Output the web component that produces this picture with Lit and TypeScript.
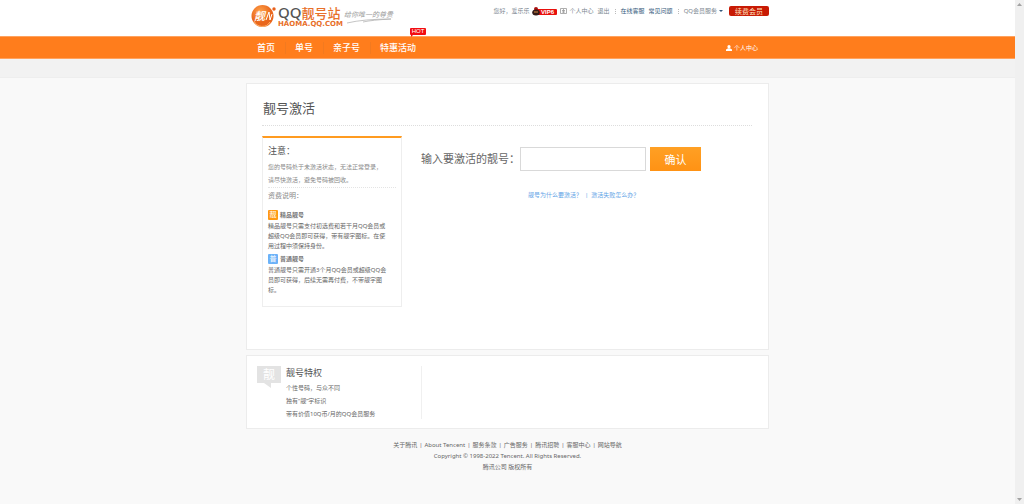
import { LitElement, html, css } from "lit";
import { customElement } from "lit/decorators.js";

const NAV = ["首页", "单号", "亲子号", "特惠活动"];
const FOOT = ["关于腾讯", "About Tencent", "服务条款", "广告服务", "腾讯招聘", "客服中心", "网站导航"];

@customElement("app-root")
export class AppRoot extends LitElement {
  static styles = css`
    :host {
      display: flex;
      min-height: 100vh;
      background: #f9f9f9;
      color: #666;
      font: 6px/10px "Noto Sans", "Noto Sans CJK SC", sans-serif;
    }
    * { box-sizing: border-box; }
    a { color: inherit; text-decoration: none; }
    h1, h2, h3, p, ul { margin: 0; padding: 0; font-weight: 400; list-style: none; }
    .page { flex: 1; min-width: 0; }
    .track {
      width: 9px;
      background: #f0f0f0;
      display: flex;
      flex-direction: column;
      justify-content: space-between;
      align-items: center;
      padding: 3px 0;
    }
    .track svg { width: 5px; height: 3px; fill: #a3a3a3; }
    .wrap { max-width: 523px; margin: 0 auto; }
    .top { background: #fff; }
    .top .wrap { display: flex; justify-content: space-between; height: 36px; }
    .brand { display: flex; align-items: flex-start; padding: 4px 0 0 5px; }
    .mark { width: 26px; height: 24px; }
    .names { width: 64px; padding: 1px 0 0 1px; white-space: nowrap; }
    .name { display: flex; font-size: 13px; line-height: 16px; font-weight: 500; color: #e8702a; }
    .name b { font-size: 15px; line-height: 15px; font-weight: 500; color: #555; }
    .domain {
      display: block;
      font: 700 7px/6px "DejaVu Sans", sans-serif;
      color: #e8702a;
    }
    .slogan { width: 54px; height: 20px; margin: 1px 0 0 3px; }
    .tools { display: flex; align-items: center; height: 10px; margin-top: 6px; color: #7c8791; white-space: nowrap; }
    .tools .dark { color: #33597c; }
    .gap { margin-left: 4px; }
    .sep { width: 1px; height: 5px; margin: 0 5px; border-left: 1px dotted #bbb; }
    .vip { width: 25px; height: 9px; margin: 0 3px 0 2px; }
    .card { width: 7px; height: 6px; margin-right: 3px; }
    .caret { margin-left: 2px; border: 2px solid transparent; border-top-color: #33597c; border-bottom: 0; }
    .renew {
      margin-left: 6px;
      width: 40px;
      height: 10px;
      border: 0;
      border-radius: 2px;
      padding: 0;
      background: #c81a04;
      color: #ffe3c0;
      font: 7px/10px "Noto Sans CJK SC", sans-serif;
    }
    .nav { background: #ff7d1c; border: solid #ffa25e; border-width: 1px 0; color: #fff; }
    .nav .wrap { display: flex; align-items: center; height: 21px; padding: 0 11px; }
    .nav li { position: relative; padding-right: 10px; margin-right: 9px; border-right: 1px solid #f27a20; }
    .nav li:last-child { border-color: transparent; }
    .nav ul { display: flex; flex: 1; font-size: 9px; line-height: 12px; font-weight: 500; }
    .hot {
      position: absolute;
      right: 0;
      top: -14px;
      width: 16px;
      border-radius: 1px;
      background: #f20d12;
      text-align: center;
      font: 6px/7px "Liberation Sans", sans-serif;
    }
    .hot::after {
      content: "";
      position: absolute;
      left: 1px;
      top: 7px;
      border: 1px solid #f20d12;
      border-right-color: transparent;
      border-bottom-color: transparent;
    }
    .me { display: flex; align-items: center; gap: 2px; }
    .me svg { width: 6px; height: 6px; fill: #fff; }
    .sub { height: 19px; background: #f2f2f2; border-bottom: 1px solid #eee; }
    .panel { background: #fff; border: 1px solid #ececec; }
    .main { margin-top: 5px; padding: 15px 16px 42px 15px; }
    .title { font-size: 13px; line-height: 18px; padding: 0 0 8px 1px; border-bottom: 1px dotted #ddd; color: #555; }
    .cols { display: flex; gap: 19px; margin-top: 10px; }
    .note { width: 140px; flex: none; padding: 5px 5px 8px; border: 1px solid #eee; border-top: 2px solid #ff9b20; }
    .note h2 { font-size: 9px; line-height: 16px; color: #555; }
    .lead { line-height: 13px; padding-top: 2px; color: #888; border-bottom: 1px dotted #e4e4e4; }
    .note h3 { font-size: 7px; line-height: 16px; margin-bottom: 6px; color: #888; }
    .kind { display: flex; align-items: center; gap: 2px; height: 10px; font-weight: 700; color: #777; }
    .desc { padding: 1px 0; margin-bottom: 2px; white-space: nowrap; }
    .tag { width: 10px; height: 10px; border-radius: 1px; background: #ff9a12; color: #fff; text-align: center; font-size: 7px; font-weight: 400; }
    .tag.blue { background: #6cb2f8; }
    .form { padding-top: 11px; }
    .row { display: flex; align-items: center; gap: 4px; }
    .row label { font-size: 11px; line-height: 16px; width: 95px; white-space: nowrap; }
    .row input { width: 126px; height: 24px; border: 1px solid #d9d9d9; background: #fff; font-size: 11px; padding: 0 4px; }
    .row button {
      width: 51px;
      height: 24px;
      border: 0;
      padding: 0;
      background: linear-gradient(#ffa024, #ff9214);
      color: #fff;
      font: 11px/24px "Noto Sans CJK SC", sans-serif;
    }
    .help { display: flex; gap: 3px; margin-top: 19px; padding-left: 107px; color: #5fa4e6; }
    .perks { margin-top: 5px; padding: 10px 10px 9px; }
    .perk { display: flex; gap: 5px; width: 165px; height: 53px; border-right: 1px solid #f0f0f0; }
    .bubble { width: 24px; height: 23px; flex: none; }
    .perk h2 { font-size: 9px; line-height: 13px; margin-bottom: 3px; color: #555; }
    .perk li { line-height: 13px; }
    .foot { padding: 11px 0 20px; text-align: center; line-height: 11px; }
    .foot i { font-style: normal; margin: 0 2px; }
  `;

  render() {
    return html`
      <div class="page">
        <header class="top">
          <div class="wrap">
            <div class="brand">
              <svg class="mark" viewBox="0 0 26 24">
                <defs><radialGradient id="g" cx=".4" cy=".3"><stop offset="0" stop-color="#ffa24a" /><stop offset="1" stop-color="#e9661c" /></radialGradient></defs>
                <circle cx="11.5" cy="12" r="11" fill="url(#g)" />
                <path d="M3 17a9 9 0 0 0 16 1" fill="none" stroke="#ffb36b" />
                <text x="3" y="16" font-size="11" font-weight="500" fill="#fff" font-family="Noto Sans CJK SC" font-style="italic">靓</text>
                <path d="M15 16l3-8 1 8 2-6" fill="none" stroke="#fff" />
                <circle cx="23" cy="5" r="1.7" fill="#e8601c" />
              </svg>
              <div class="names">
                <span class="name"><b>QQ</b>靓号站</span>
                <span class="domain">HAOMA.QQ.COM</span>
              </div>
              <svg class="slogan" viewBox="0 0 54 20" fill="none" stroke="#aaa">
                <text x="0" y="12" font-size="7" fill="#999" stroke="none" font-style="italic" font-family="Noto Sans CJK SC">给你唯一的尊贵</text>
                <path d="M3 18Q20 14 47 14Q28 15 19 17" stroke-width=".7" />
              </svg>
            </div>
            <div class="tools">
              <span>您好，</span><span>爱乐乐</span>
              <svg class="vip" viewBox="0 0 25 9">
                <rect x="4" y="2" width="21" height="6" rx="1" fill="#e8100c" />
                <circle cx="4" cy="2" r="2" fill="#a11" />
                <ellipse cx="4" cy="5.5" rx="3.8" ry="3" fill="#351c18" />
                <path d="M2 5h4" stroke="#d98b45" />
                <text x="9" y="7" font-size="6" font-weight="700" fill="#fff" font-family="Liberation Sans">VIP6</text>
              </svg>
              <svg class="card" viewBox="0 0 7 6" fill="none" stroke="#999"><path d="M.5.5h6v5h-6zM2 2.5h3M2 4h3M3.5 1v4" stroke-width=".8" /></svg>
              <a href="#">个人中心</a><a class="gap" href="#">退出</a>
              <span class="sep"></span>
              <a class="dark" href="#">在线客服</a><a class="dark gap" href="#">常见问题</a>
              <span class="sep"></span>
              <a href="#">QQ会员服务</a><span class="caret"></span>
              <button class="renew">续费会员</button>
            </div>
          </div>
        </header>
        <nav class="nav">
          <div class="wrap">
            <ul>
              ${NAV.map((t, i) => html`<li><a href="#">${t}</a>${i === 3 ? html`<span class="hot">HOT</span>` : ""}</li>`)}
            </ul>
            <a class="me" href="#">
              <svg viewBox="0 0 6 6"><circle cx="3" cy="1.7" r="1.6" /><path d="M0 6V4.5L2 3.3h2l2 1.2V6z" /></svg>个人中心
            </a>
          </div>
        </nav>
        <div class="sub"></div>
        <main class="wrap">
          <section class="panel main">
            <h1 class="title">靓号激活</h1>
            <div class="cols">
              <aside class="note">
                <h2>注意：</h2>
                <p class="lead">您的号码处于未激活状态，无法正常登录，<br />请尽快激活，避免号码被回收。</p>
                <h3>资费说明：</h3>
                <div class="kind"><span class="tag">靓</span>精品靓号</div>
                <p class="desc">精品靓号只需支付初选费和若干月QQ会员或<br />超级QQ会员即可获得，带有靓字图标。在使<br />用过程中须保持身份。</p>
                <div class="kind"><span class="tag blue">普</span>普通靓号</div>
                <p class="desc">普通靓号只需开通3个月QQ会员或超级QQ会<br />员即可获得，后续无需再付费，不带靓字图<br />标。</p>
              </aside>
              <form class="form" @submit=${(e: Event) => e.preventDefault()}>
                <div class="row">
                  <label for="num">输入要激活的靓号：</label>
                  <input id="num" type="text" />
                  <button type="submit">确认</button>
                </div>
                <p class="help"><a href="#">靓号为什么要激活？</a><span>|</span><a href="#">激活失败怎么办？</a></p>
              </form>
            </div>
          </section>
          <section class="panel perks">
            <div class="perk">
              <svg class="bubble" viewBox="0 0 24 23">
                <path d="M0 0h24v17h-10v5l-7-5H0z" fill="#e3e3e3" />
                <text x="6" y="13" font-size="12" fill="#fff" font-family="Noto Sans CJK SC">靓</text>
              </svg>
              <div>
                <h2>靓号特权</h2>
                <ul>
                  <li>个性号码，与众不同</li>
                  <li>独有“靓”字标识</li>
                  <li>带有价值10Q币/月的QQ会员服务</li>
                </ul>
              </div>
            </div>
          </section>
        </main>
        <footer class="foot">
          <p>${FOOT.map((t, i) => html`${i ? html`<i>|</i>` : ""}<a href="#">${t}</a>`)}</p>
          <p>Copyright © 1998-2022 Tencent. All Rights Reserved.</p>
          <p>腾讯公司 版权所有</p>
        </footer>
      </div>
      <div class="track" aria-hidden="true">
        <svg viewBox="0 0 5 3"><path d="M0 3L2.500 0L5 3z" /></svg>
        <svg viewBox="0 0 5 3"><path d="M0 0h5L2.500 3z" /></svg>
      </div>
    `;
  }
}
